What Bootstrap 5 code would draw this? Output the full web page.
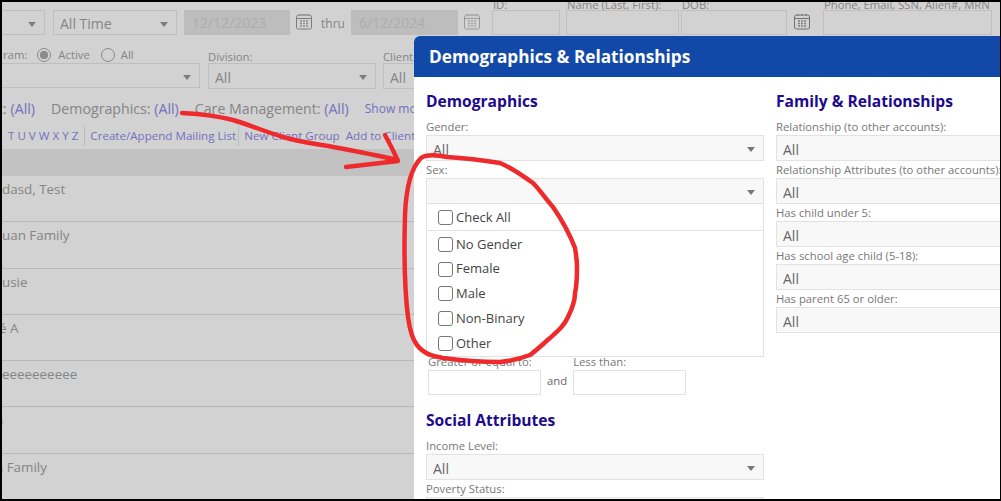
<!DOCTYPE html>
<html lang="en">
<head>
    <meta charset="UTF-8">
    <meta name="viewport" content="width=device-width, initial-scale=1.0">
    <title>Demographics &amp; Relationships</title>
    <link rel="stylesheet" href="https://cdn.jsdelivr.net/npm/bootstrap@5.3.0/dist/css/bootstrap.min.css">
    <style>
        body {
            margin: 0;
            background: #000;
            font-family: "Open Sans", "Liberation Sans", sans-serif;
            font-size: 14px;
            color: #a2a2a2;
        }

        /* Screenshot frame with its thin black edge */
        .shot {
            position: relative;
            width: 998px;
            height: 497px;
            margin: 2px 0 0 2px;
            overflow: hidden;
            background: #fff;
        }

        /* Dimmed page behind the dialog */
        .page-dim {
            position: absolute;
            inset: 0;
            background: rgba(0, 0, 0, .175);
        }

        .field {
            height: 25px;
            border: 1px solid #e8e8e8;
            background: #fff;
            flex: none;
        }

        .field-off { background: #e6e6e6; border-color: #e6e6e6; color: #d2d2d2; padding-left: 7px; line-height: 24px; }

        .cap { font-size: 11.3px; line-height: 14px; color: #a2a2a2; white-space: nowrap; }

        .top-row { padding-top: 8px; position: relative; height: 34px; }
        .top-cap { position: absolute; top: -13px; }

        .w-a { width: 48px; margin-left: -5px; }
        .w-b { width: 124px; margin-left: 8px; }
        .w-c { width: 106px; margin-left: 7px; }
        .w-d { width: 107px; margin-left: 6px; }
        .w-e { width: 68px; margin-left: 12px; }
        .w-f { width: 113px; margin-left: 6px; }
        .w-g { width: 106px; margin-left: 2px; }
        .w-h { width: 169px; margin-left: 13px; }

        .cal { flex: none; margin: 3px 0 0 6px; }
        .cal-far { margin-left: 7px; }
        .thru { font-size: 12px; color: #a2a2a2; margin: 5px 6px 0 9px; }

        .pick { position: relative; }
        .pick select {
            display: block;
            width: 100%;
            height: 100%;
            border: 0;
            padding: 2px 0 0 6px;
            background: transparent;
            appearance: none;
            color: #a2a2a2;
            font-size: 14px;
            border-radius: 0;
        }
        .pick::after {
            content: "";
            position: absolute;
            right: 8px;
            top: 11px;
            border: 4px solid transparent;
            border-top: 5px solid #999;
            border-bottom: 0;
        }

        .filter-row { margin-top: 11px; height: 43px; }
        .left-col { width: 201px; margin-left: -3px; flex: none; }
        .mid-col { width: 168px; margin-left: 8px; flex: none; }
        .end-col { width: 168px; margin-left: 7px; flex: none; }
        .radio-line { height: 15px; padding-left: 4px; }
        .left-col .pick { height: 25px; margin-top: 1px; }
        .mid-col .cap, .end-col .cap { padding-top: 3px; }
        .mid-col .pick, .end-col .pick { height: 26px; margin-top: -1px; }

        .ring {
            width: 14px;
            height: 14px;
            border: 1px solid #aaa;
            border-radius: 50%;
            display: inline-block;
            flex: none;
        }
        .ring-on { background: radial-gradient(circle, #aaa 0 4px, #fff 4.5px); }
        .gap-a { margin-left: 10px; }
        .gap-b { margin-left: 7px; }
        .gap-c { margin-left: 11px; }
        .gap-d { margin-left: 6px; }

        .sum-row { margin: 9px 0 0 -4px; height: 20px; line-height: 20px; font-size: 14.2px; white-space: nowrap; }
        .lnk { color: #9088ea; text-decoration: none; }
        .sum-row .small-lnk { font-size: 12px; }

        .abc-row { margin-top: 7px; height: 20px; line-height: 20px; font-size: 11.6px; white-space: nowrap; }
        .abc-row .lnk { padding: 0 6px; }
        .abc-row .lnk + .lnk { padding-left: 0; }
        .abc-row .lnk.split { padding: 0 2px 0 5px; }
        .abc-row .lnk.split + .lnk.split { padding-right: 6px; }
        .split { border-left: 1px solid #e4e4e4; }

        .band { height: 27px; margin-top: 3px; background: #ececec; }
        .name-row {
            height: 46.3px;
            border-bottom: 1px solid #e0e0e0;
            padding-top: 3px;
            font-size: 13.4px;
            line-height: 21px;
            white-space: nowrap;
        }
        .cut { margin-left: -3px; }
        .cut-more { margin-left: -7px; }

        /* Dialog */
        .dlg {
            position: absolute;
            left: 412px;
            top: 34px;
            width: 650px;
            height: 480px;
            background: #fff;
            border-top-left-radius: 6px;
            overflow: hidden;
        }
        .dlg-head {
            height: 41px;
            background: #1249a9;
            color: #fff;
            font-size: 17.2px;
            font-weight: 700;
            line-height: 41px;
            padding-left: 15px;
        }
        .dlg-body { padding: 13px 0 0 12px; gap: 12px; }
        .col-one { width: 338px; flex: none; }
        .col-two { width: 300px; flex: none; }
        .sec {
            color: #1d0a8c;
            font-size: 15.6px;
            font-weight: 700;
            line-height: 22px;
            margin: 0 0 8px;
        }
        .dlg .cap { height: 14px; margin-bottom: 1px; display: block; color: #777; }
        .dlg .pick {
            height: 26px;
            border: 1px solid #e2e2e2;
            background: #f8f8f8;
            margin-bottom: 2px;
        }
        .dlg .pick::after { border-top-color: #777; }
        .dlg .pick select { background: transparent; padding-top: 3px; color: #666; }

        .drop {
            border: 1px solid #e2e2e2;
            border-top: 0;
            height: 153px;
            padding: 1px 11px 0;
            color: #444;
            margin-top: -2px;
            font-size: 13px;
        }
        .tick {
            display: flex;
            align-items: center;
            gap: 3px;
            height: 24.8px;
            white-space: nowrap;
        }
        .tick input {
            appearance: none;
            width: 15px;
            height: 15px;
            margin: 0;
            border: 1px solid #777;
            border-radius: 3px;
            background: #fff;
            flex: none;
        }
        .tick-all { height: 26px; border-bottom: 1px solid #e2e2e2; margin: 0 -11px 1px; padding: 0 11px; }
        .tick-first { margin-top: 1px; }

        .range { margin: -2px 0 0 2px; gap: 6px; align-items: flex-end; }
        .range input {
            display: block;
            height: 25px;
            border: 1px solid #e2e2e2;
            margin-top: 1px;
        }
        .in-a { width: 113px; }
        .in-b { width: 113px; }
        .and-word { font-size: 11.3px; color: #666; padding-bottom: 5px; }
        .sec-low { margin: 14px 0 8px; }

        .scrawl { position: absolute; left: -2px; top: -2px; pointer-events: none; }
    </style>
</head>
<body>

<div class="shot">

    <!-- page behind the dialog -->
    <div class="top-row d-flex">
        <div class="field pick w-a"><select><option></option></select></div>
        <div class="field pick w-b"><select><option>All Time</option></select></div>
        <div class="field field-off w-c">12/12/2023</div>
        <svg class="cal" width="16" height="17" viewBox="0 0 16 17"><rect x=".5" y="2" width="15" height="14" rx="2" fill="#fff" stroke="#999"/><path d="M1 5.5h14" stroke="#999"/><path d="M4 1v2M8 1v2M12 1v2" stroke="#999"/><path d="M4 8h2M7 8h2M10 8h2M4 10.500h2M7 10.500h2M10 10.500h2M4 13h2M7 13h2M10 13h2" stroke="#aaa" stroke-width="1.300"/></svg>
        <span class="thru">thru</span>
        <div class="field field-off w-d ms-0">6/12/2024</div>
        <svg class="cal" width="16" height="17" viewBox="0 0 16 17"><rect x=".5" y="2" width="15" height="14" rx="2" fill="#fff" stroke="#bbb"/><path d="M1 5.500h14" stroke="#bbb"/><path d="M4 1v2M8 1v2M12 1v2" stroke="#bbb"/><path d="M4 8h2M7 8h2M10 8h2M4 10.500h2M7 10.500h2M10 10.500h2M4 13h2M7 13h2M10 13h2" stroke="#ccc" stroke-width="1.300"/></svg>
        <div class="field w-e position-relative"><span class="cap top-cap">ID:</span></div>
        <div class="field w-f position-relative"><span class="cap top-cap">Name (Last, First):</span></div>
        <div class="field w-g position-relative"><span class="cap top-cap">DOB:</span></div>
        <svg class="cal cal-far" width="16" height="17" viewBox="0 0 16 17"><rect x=".5" y="2" width="15" height="14" rx="2" fill="#fff" stroke="#888"/><path d="M1 5.500h14" stroke="#888"/><path d="M4 1v2M8 1v2M12 1v2" stroke="#888"/><path d="M4 8h2M7 8h2M10 8h2M4 10.500h2M7 10.500h2M10 10.500h2M4 13h2M7 13h2M10 13h2" stroke="#999" stroke-width="1.300"/></svg>
        <div class="field w-h position-relative"><span class="cap top-cap">Phone, Email, SSN, Alien#, MRN</span></div>
    </div>

    <div class="filter-row d-flex">
        <div class="left-col">
            <div class="d-flex align-items-center cap radio-line">
                <span>ram:</span>
                <span class="ring ring-on gap-a"></span><span class="gap-b">Active</span>
                <span class="ring gap-c"></span><span class="gap-d">All</span>
            </div>
            <div class="field pick"><select><option></option></select></div>
        </div>
        <div class="mid-col">
            <span class="cap d-block">Division:</span>
            <div class="field pick"><select><option>All</option></select></div>
        </div>
        <div class="end-col">
            <span class="cap d-block">Client Type:</span>
            <div class="field pick"><select><option>All</option></select></div>
        </div>
    </div>

    <div class="sum-row d-flex">
        <span>t: <a class="lnk" href="#">(All)</a></span>
        <span class="ms-3">Demographics: <a class="lnk" href="#">(All)</a></span>
        <span class="ms-3">Care Management: <a class="lnk" href="#">(All)</a></span>
        <a class="lnk small-lnk ms-3" href="#">Show more</a>
    </div>

    <div class="abc-row d-flex">
        <a class="lnk" href="#">T U V W X Y Z</a>
        <a class="lnk split" href="#">Create/Append Mailing List</a>
        <a class="lnk split" href="#">New Client Group</a>
        <a class="lnk" href="#">Add to Client</a>
    </div>

    <div class="band"></div>
    <div class="name-row">dasd, Test</div>
    <div class="name-row">uan Family</div>
    <div class="name-row">usie</div>
    <div class="name-row"><span class="cut">é A</span></div>
    <div class="name-row">eeeeeeeeee</div>
    <div class="name-row"><span class="cut-more lnk">n</span></div>
    <div class="name-row"><span class="cut-more">n Family</span></div>

    <div class="page-dim"></div>

    <!-- dialog -->
    <div class="dlg">
        <div class="dlg-head">Demographics &amp; Relationships</div>
        <div class="dlg-body d-flex">
            <div class="col-one">
                <h2 class="sec">Demographics</h2>
                <label class="cap">Gender:</label>
                <div class="pick"><select><option>All</option></select></div>
                <label class="cap">Sex:</label>
                <div class="pick"><select><option></option></select></div>
                <div class="drop">
                    <label class="tick tick-all"><input type="checkbox"> Check All</label>
                    <label class="tick tick-first"><input type="checkbox"> No Gender</label>
                    <label class="tick"><input type="checkbox"> Female</label>
                    <label class="tick"><input type="checkbox"> Male</label>
                    <label class="tick"><input type="checkbox"> Non-Binary</label>
                    <label class="tick"><input type="checkbox"> Other</label>
                </div>
                <div class="range d-flex">
                    <div><span class="cap">Greater or equal to:</span><input class="in-a" type="text"></div>
                    <span class="and-word">and</span>
                    <div><span class="cap">Less than:</span><input class="in-b" type="text"></div>
                </div>
                <h2 class="sec sec-low">Social Attributes</h2>
                <label class="cap">Income Level:</label>
                <div class="pick"><select><option>All</option></select></div>
                <label class="cap">Poverty Status:</label>
                <div class="pick"><select><option>All</option></select></div>
            </div>
            <div class="col-two">
                <h2 class="sec">Family &amp; Relationships</h2>
                <label class="cap">Relationship (to other accounts):</label>
                <div class="pick"><select><option>All</option></select></div>
                <label class="cap">Relationship Attributes (to other accounts):</label>
                <div class="pick"><select><option>All</option></select></div>
                <label class="cap">Has child under 5:</label>
                <div class="pick"><select><option>All</option></select></div>
                <label class="cap">Has school age child (5-18):</label>
                <div class="pick"><select><option>All</option></select></div>
                <label class="cap">Has parent 65 or older:</label>
                <div class="pick"><select><option>All</option></select></div>
            </div>
        </div>
    </div>

    <!-- red marker annotation on top of the screenshot -->
    <svg class="scrawl" width="1001" height="501" viewBox="0 0 1001 501" fill="none" stroke="#ee2a2c" stroke-width="4.500" stroke-linecap="round" stroke-linejoin="round">
        <path d="M182 113C200 114 218 116 233 120C250 125 266 132 283 137C300 142 316 144 333 147C355 151 376 155 397 160"/>
        <path d="M385 135C390 144 394 152 398 161C380 163 362 165 346 167"/>
        <path d="M447 157C437 155 427 154 421 158C411 168 406 190 405 215C404 250 404 285 408 317C410 332 413 340 417 345C424 354 432 356 443 358C465 361 482 362 500 362C512 361 522 358 530 355C538 349 544 343 550 338C558 331 564 326 568 317C573 307 575 300 575 293C577 285 577 275 577 267C577 260 576 254 575 248C570 235 562 220 553 207C545 198 540 190 533 183C522 175 512 168 500 163C482 160 465 158 447 157Z"/>
    </svg>
</div>

<script src="https://cdn.jsdelivr.net/npm/bootstrap@5.3.0/dist/js/bootstrap.bundle.min.js"></script>
</body>
</html>
